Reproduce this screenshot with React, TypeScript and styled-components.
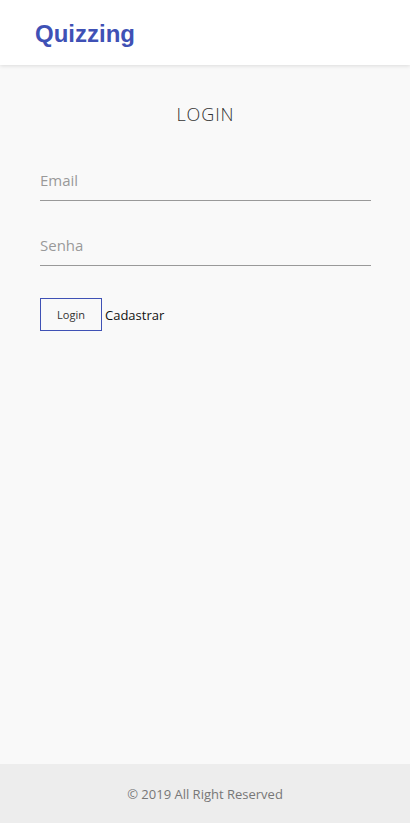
import React from 'react';
import styled, { createGlobalStyle } from 'styled-components';

const GlobalStyle = createGlobalStyle`
    html, body, #root {
        margin: 0;
        padding: 0;
        height: 100%;
    }
    body {
        font-family: 'Open Sans', 'Liberation Sans', sans-serif;
        background: #f9f9f9;
    }
`;

const Page = styled.div`
    display: flex;
    flex-direction: column;
    min-height: 100vh;
`;

const Header = styled.header`
    height: 65px;
    background: #ffffff;
    box-shadow: 0 1px 4px rgba(0, 0, 0, 0.12);
    display: flex;
    align-items: center;
    padding: 0 35px;
    position: relative;
    z-index: 1;
`;

const Brand = styled.h1`
    margin: 0;
    font-family: 'Liberation Sans', Arial, sans-serif;
    font-weight: 700;
    font-size: 24px;
    color: #3f51b5;
    padding-top: 2px;
`;

const Main = styled.main`
    flex: 1;
    display: flex;
    flex-direction: column;
    padding: 37px 39px 0 40px;
`;

const Title = styled.h2`
    margin: 0 0 39px;
    text-align: center;
    font-family: 'Open Sans', sans-serif;
    font-weight: 300;
    font-size: 18px;
    letter-spacing: 0.05em;
    color: #333;
`;

const Field = styled.input<{ $gap?: number }>`
    display: block;
    width: 100%;
    box-sizing: border-box;
    border: none;
    border-bottom: 1px solid #999;
    background: transparent;
    font-family: 'Open Sans', sans-serif;
    font-size: 15px;
    color: #333;
    padding: 5px 0 10px;
    margin-bottom: ${(p) => p.$gap ?? 29}px;
    outline: none;

    &::placeholder {
        color: #999;
    }
`;

const Actions = styled.div`
    display: flex;
    align-items: center;
    gap: 3px;
`;

const LoginButton = styled.button`
    width: 62px;
    height: 33px;
    border: 1px solid #3f51b5;
    background: transparent;
    font-family: 'Open Sans', sans-serif;
    font-size: 11px;
    color: #333;
    padding: 0;
`;

const LinkText = styled.span`
    font-family: 'Open Sans', sans-serif;
    font-size: 13px;
    color: #111;
`;

const Footer = styled.footer`
    height: 59px;
    background: #ededed;
    display: flex;
    align-items: center;
    justify-content: center;
    font-family: 'Open Sans', sans-serif;
    font-size: 13px;
    color: #777;
`;

export default function App() {
    return (
        <>
            <GlobalStyle />
            <Page>
                <Header>
                    <Brand>Quizzing</Brand>
                </Header>
                <Main>
                    <Title>LOGIN</Title>
                    <Field placeholder="Email" />
                    <Field placeholder="Senha" type="password" $gap={32} />
                    <Actions>
                        <LoginButton>Login</LoginButton>
                        <LinkText>Cadastrar</LinkText>
                    </Actions>
                </Main>
                <Footer>© 2019 All Right Reserved</Footer>
            </Page>
        </>
    );
}
